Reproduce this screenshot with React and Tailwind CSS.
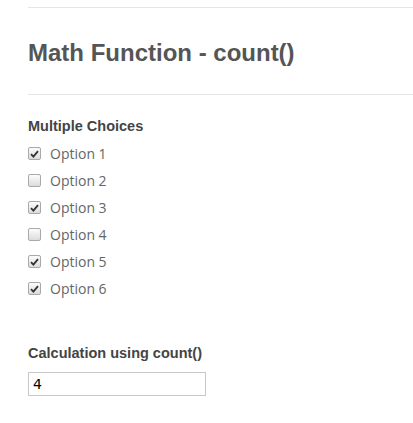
const options = [
  { label: "Option 1", checked: true },
  { label: "Option 2", checked: false },
  { label: "Option 3", checked: true },
  { label: "Option 4", checked: false },
  { label: "Option 5", checked: true },
  { label: "Option 6", checked: true },
];

const Check = ({ checked }) => (
  <span className="w-[13px] h-[13px] shrink-0 rounded-[2px] border border-[#a9a9a9] bg-gradient-to-b from-[#fcfcfc] to-[#dcdcdc] flex items-center justify-center">
    {checked && (
      <svg width="9" height="8" viewBox="0 0 9 8">
        <path d="M1 4.2 L3.4 6.6 L8 1.2" fill="none" stroke="#333" strokeWidth="1.8" />
      </svg>
    )}
  </span>
);

export default function App() {
  const count = options.filter((o) => o.checked).length;

  return (
    <div className="min-h-[423px] bg-white pl-[28px] pt-[7px] font-['Liberation_Sans',Arial,sans-serif]">
      <div className="border-t border-[#e5e5e5]" />

      <h1 className="mt-[31px] text-[24px] leading-[28px] font-bold text-[#555]">
        Math Function - count()
      </h1>

      <div className="mt-[27px] border-t border-[#e5e5e5]" />

      {/* Checkboxes */}
      <div className="mt-[23px]">
        <p className="text-[14.5px] leading-[17px] font-bold text-[#444]">
          Multiple Choices
        </p>
        <div className="mt-[5px] flex flex-col">
          {options.map((o) => (
            <label key={o.label} className="h-[27px] flex items-center gap-[9px]">
              <Check checked={o.checked} />
              <span className="font-['Open_Sans',sans-serif] text-[14px] text-[#666]">
                {o.label}
              </span>
            </label>
          ))}
        </div>
      </div>

      {/* Result */}
      <div className="mt-[43px]">
        <p className="text-[14.5px] leading-[17px] font-bold text-[#444]">
          Calculation using count()
        </p>
        <div className="mt-[10px] w-[178px] h-[24px] border border-[#c8c8c8] flex items-center px-[4px] font-['DejaVu_Sans',sans-serif] text-[14px] text-black">
          {count}
        </div>
      </div>
    </div>
  );
}
